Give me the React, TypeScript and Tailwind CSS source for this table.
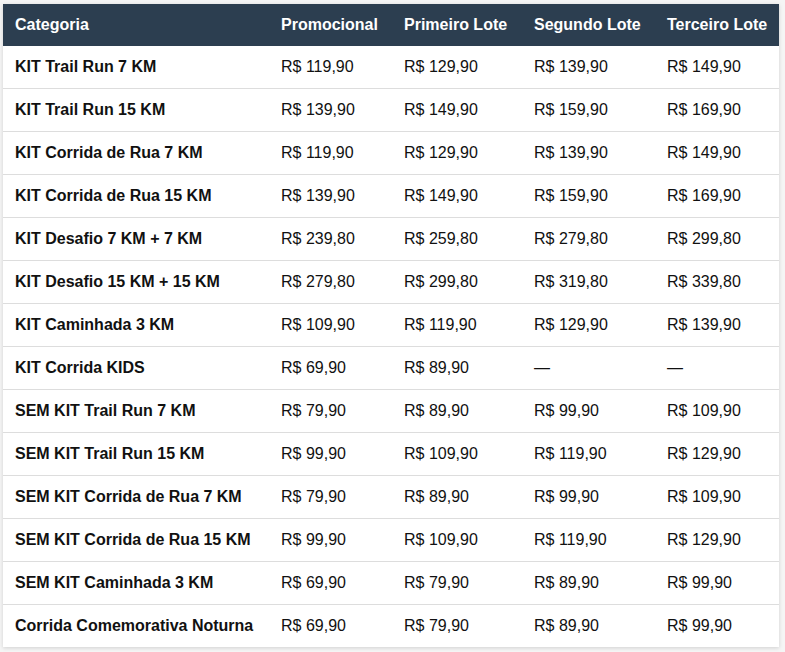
import React from "react";

const rows: string[][] = [
  ["KIT Trail Run 7 KM", "R$ 119,90", "R$ 129,90", "R$ 139,90", "R$ 149,90"],
  ["KIT Trail Run 15 KM", "R$ 139,90", "R$ 149,90", "R$ 159,90", "R$ 169,90"],
  ["KIT Corrida de Rua 7 KM", "R$ 119,90", "R$ 129,90", "R$ 139,90", "R$ 149,90"],
  ["KIT Corrida de Rua 15 KM", "R$ 139,90", "R$ 149,90", "R$ 159,90", "R$ 169,90"],
  ["KIT Desafio 7 KM + 7 KM", "R$ 239,80", "R$ 259,80", "R$ 279,80", "R$ 299,80"],
  ["KIT Desafio 15 KM + 15 KM", "R$ 279,80", "R$ 299,80", "R$ 319,80", "R$ 339,80"],
  ["KIT Caminhada 3 KM", "R$ 109,90", "R$ 119,90", "R$ 129,90", "R$ 139,90"],
  ["KIT Corrida KIDS", "R$ 69,90", "R$ 89,90", "—", "—"],
  ["SEM KIT Trail Run 7 KM", "R$ 79,90", "R$ 89,90", "R$ 99,90", "R$ 109,90"],
  ["SEM KIT Trail Run 15 KM", "R$ 99,90", "R$ 109,90", "R$ 119,90", "R$ 129,90"],
  ["SEM KIT Corrida de Rua 7 KM", "R$ 79,90", "R$ 89,90", "R$ 99,90", "R$ 109,90"],
  ["SEM KIT Corrida de Rua 15 KM", "R$ 99,90", "R$ 109,90", "R$ 119,90", "R$ 129,90"],
  ["SEM KIT Caminhada 3 KM", "R$ 69,90", "R$ 79,90", "R$ 89,90", "R$ 99,90"],
  ["Corrida Comemorativa Noturna", "R$ 69,90", "R$ 79,90", "R$ 89,90", "R$ 99,90"],
];

const headers = ["Categoria", "Promocional", "Primeiro Lote", "Segundo Lote", "Terceiro Lote"];
const widths = ["w-[266px]", "w-[123px]", "w-[130px]", "w-[133px]", "w-[124px]"];

export default function App() {
  return (
    <div className="min-h-[652px] bg-[#f5f5f5] pl-[3px] pt-[4px] text-[16px] text-[#111]" style={{ fontFamily: '"Liberation Sans", Arial, sans-serif' }}>
      <div className="w-[776px] bg-white shadow-[0_1px_4px_rgba(0,0,0,0.15)]">
        <div className="flex h-[42px] items-center bg-[#2c3e50] font-bold text-white">
          {headers.map((h, i) => (
            <div key={h} className={`${widths[i]} shrink-0 whitespace-nowrap pl-3`}>{h}</div>
          ))}
        </div>
        {rows.map((r, ri) => (
          <div
            key={ri}
            className={`flex items-center ${ri < rows.length - 1 ? "h-[43px] border-b border-[#dddddd]" : "h-[42px]"}`}
          >
            {r.map((c, ci) => (
              <div key={ci} className={`${widths[ci]} shrink-0 whitespace-nowrap pl-3 ${ci === 0 ? "font-bold" : ""}`}>{c}</div>
            ))}
          </div>
        ))}
      </div>
    </div>
  );
}
